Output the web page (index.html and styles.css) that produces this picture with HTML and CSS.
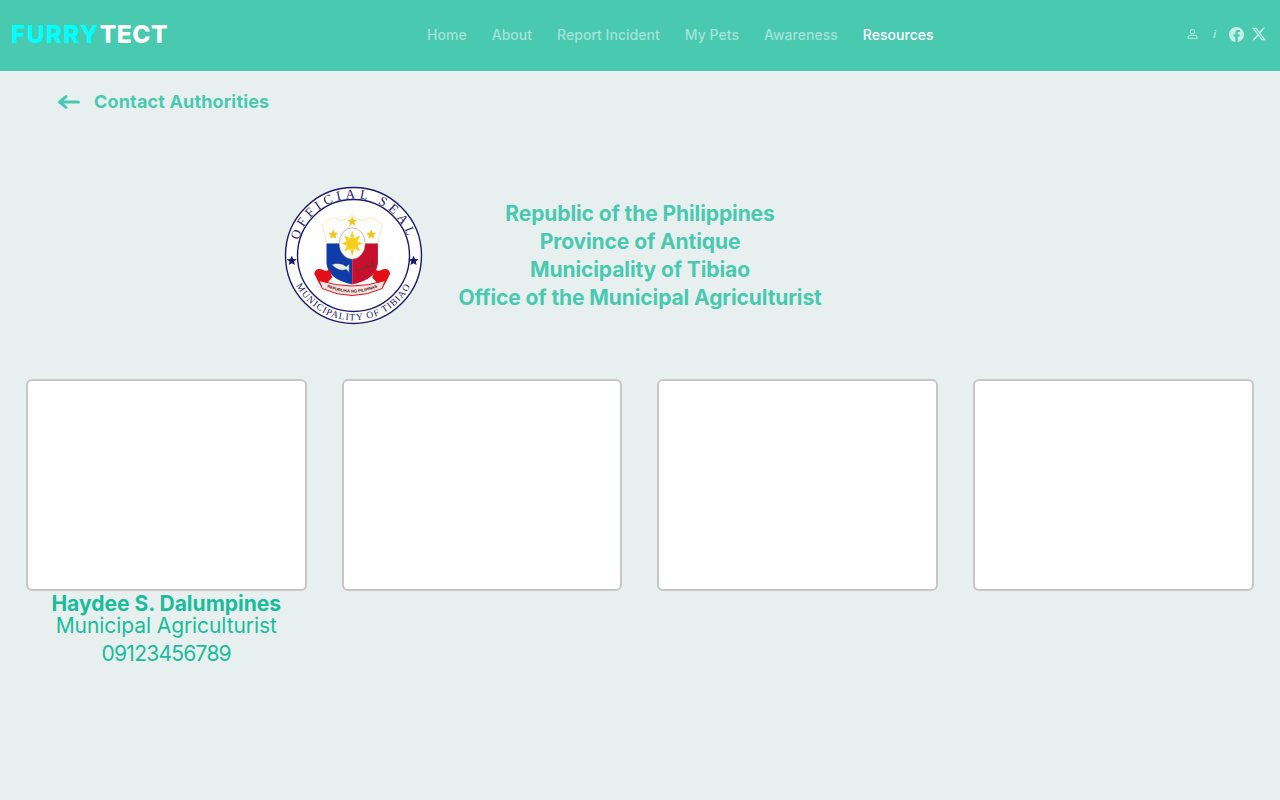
FILE: index.html
```html
<!DOCTYPE html>
<html lang="en">
<head>
<meta charset="utf-8">
<title>Furrytect - Contact Authorities</title>
<link rel="stylesheet" href="styles.css">
</head>
<body>
<header class="topbar">
  <div class="logo"><span class="logo-a">FURRY</span><span class="logo-b">TECT</span></div>
  <nav class="nav">
    <a class="nav-link">Home</a>
    <a class="nav-link">About</a>
    <a class="nav-link">Report Incident</a>
    <a class="nav-link">My Pets</a>
    <a class="nav-link">Awareness</a>
    <a class="nav-link active">Resources</a>
  </nav>
  <div class="tools">
    <svg class="ico-user" viewBox="0 0 11 10" width="11" height="10" fill="none" stroke="currentColor" stroke-width="1.1"><circle cx="5.5" cy="2.7" r="2.2"/><path d="M1 9.5V8.4C1 7.1 2 6.5 3.2 6.5h4.6C9 6.5 10 7.1 10 8.4v1.1z"/></svg>
    <span class="ico-info">i</span>
    <svg class="ico-fb" viewBox="0 0 16 16" width="15" height="15" fill="currentColor"><path d="M16 8.049c0-4.446-3.582-8.05-8-8.05C3.58 0-.002 3.603-.002 8.05c0 4.017 2.926 7.347 6.75 7.951v-5.625h-2.03V8.05H6.75V6.275c0-2.017 1.195-3.131 3.022-3.131.876 0 1.791.157 1.791.157v1.98h-1.009c-.993 0-1.303.621-1.303 1.258v1.51h2.218l-.354 2.326H9.25V16c3.824-.604 6.75-3.934 6.75-7.951z"/></svg>
    <svg class="ico-x" viewBox="0 0 16 16" width="14" height="14" fill="currentColor"><path d="M12.6.75h2.454l-5.36 6.142L16 15.25h-4.937l-3.867-5.07-4.425 5.07H.316l5.733-6.57L0 .75h5.063l3.495 4.633L12.601.75Zm-.86 13.028h1.36L4.323 2.145H2.865z"/></svg>
  </div>
</header>

<main>
  <div class="back">
    <svg class="back-arrow" viewBox="0 0 22 14" width="22" height="14" fill="none" stroke="currentColor" stroke-width="3" stroke-linecap="round" stroke-linejoin="round"><path d="M20.5 7H2M8 1.7 1.6 7 8 12.3"/></svg>
    <span class="back-title">Contact Authorities</span>
  </div>

  <section class="office">
    <svg class="seal" viewBox="-69.5 -69.5 139 139" width="139" height="139">
      <defs>
        <path id="arc-top" d="M-54 18A57 57 0 1 1 54 18"/>
        <path id="arc-bottom" d="M-62 18A64.5 64.5 0 0 0 62 18"/>
        <path id="arc-ribbon" d="M-31 29Q0 45 31 29"/>
        <polygon id="star" points="0,-5 1.5,-1.7 5,-1.5 2.3,.8 3.1,4.2 0,2.4 -3.1,4.2 -2.3,.8 -5,-1.5 -1.5,-1.7"/>
      </defs>
      <circle class="seal-disc" r="68"/>
      <circle class="seal-ring" r="56"/>
      <text class="seal-top"><textPath href="#arc-top" startOffset="50%" text-anchor="middle">OFFICIAL SEAL</textPath></text>
      <text class="seal-bottom"><textPath href="#arc-bottom" startOffset="50%" text-anchor="middle">MUNICIPALITY OF TIBIAO</textPath></text>
      <use href="#star" class="navy" x="-61.7" y="5.3"/>
      <use href="#star" class="navy" x="60" y="5.3"/>
      <g transform="translate(-1.3 0)">
        <path class="shield-top" d="M-30.3 -30.3Q-25 -36 -19 -37.7Q-15 -37 -11 -35Q-5 -36 0 -40Q5 -36 11 -35Q15 -37 19 -37.7Q25 -36 30.3 -30.3Q27 -22 25.7 -12H-25.7Q-27 -22 -30.3 -30.3z"/>
        <path class="shield-blue" d="M-25.7 -12H0V29Q-24 24 -25.7 8z"/>
        <path class="shield-red" d="M25.7 -12H0V29Q24 24 25.7 8z"/>
        <ellipse class="oval" cx="0" cy="-12" rx="13" ry="15.7"/>
        <g class="sun">
          <circle cy="-12" r="6.3"/>
          <path d="M0 -24.5 2 -18.5H-2zM0 .5 2 -5.5H-2zM-11 -12 -6 -10V-14zM11 -12 6 -10V-14zM-8 -20 -2.8 -17.8 -5.8 -14.8zM8 -20 2.8 -17.8 5.8 -14.8zM-8 -4 -2.8 -6.2 -5.8 -9.2zM8 -4 2.8 -6.2 5.8 -9.2z"/>
        </g>
        <use href="#star" class="star" x="0" y="-34"/>
        <use href="#star" class="star" x="-19" y="-21"/>
        <use href="#star" class="star" x="19" y="-21"/>
        <path class="tuna" d="M-20.5 9Q-12 6 -6 11L-3 8.5V17L-6 14Q-13 17 -20.5 9z"/>
        <path class="plow" d="M4 15.5 22 9M20 3 21 12M14 8 16 13"/>
        <path class="ribbon-tail" d="M-38 18Q-36 11 -28 15Q-24 16 -23 13L-20 22 -30 33Q-35 25 -38 18zM38 18Q36 11 28 15Q24 16 23 13L20 22 30 33Q35 25 38 18z"/>
        <path class="ribbon-band" d="M-33 25Q0 36 33 25L30 33Q0 47 -30 33z"/>
        <text class="ribbon-text"><textPath href="#arc-ribbon" startOffset="50%" text-anchor="middle">REPUBLIKA NG PILIPINAS</textPath></text>
      </g>
    </svg>
    <div class="office-text">
      <div>Republic of the Philippines</div>
      <div>Province of Antique</div>
      <div>Municipality of Tibiao</div>
      <div>Office of the Municipal Agriculturist</div>
    </div>
    <div class="seal-spacer"></div>
  </section>

  <section class="people">
    <article class="person">
      <div class="photo"></div>
      <div class="name">Haydee S. Dalumpines</div>
      <div class="detail">Municipal Agriculturist</div>
      <div class="detail phone">09123456789</div>
    </article>
    <article class="person"><div class="photo"></div></article>
    <article class="person"><div class="photo"></div></article>
    <article class="person"><div class="photo"></div></article>
  </section>
</main>
</body>
</html>
```
FILE: styles.css
```css
* { box-sizing: border-box; }
html, body { margin: 0; height: 100%; }
body {
  background: #e8f0ef;
  font-family: Inter, "Noto Sans", sans-serif;
  overflow: hidden;
}
.topbar {
  height: 71px;
  background: #48c9b0;
  display: flex;
  align-items: center;
  padding: 0 14px 3px 11px;
}
.logo {
  width: 157px;
  flex: none;
  font-size: 24.5px;
  font-weight: 800;
  white-space: nowrap;
}
.logo-a { color: #0ff; letter-spacing: 1.3px; }
.logo-b { color: #fff; letter-spacing: .5px; }
.nav {
  margin-left: 259px;
  display: flex;
  gap: 25px;
  font-size: 14px;
  font-weight: 500;
  letter-spacing: .03px;
  white-space: nowrap;
}
.nav-link { color: rgba(255,255,255,.5); }
.nav-link.active { color: #fff; }
.tools {
  margin-left: auto;
  display: flex;
  align-items: center;
  color: rgba(255,255,255,.55);
}
.ico-info {
  margin-left: 15px;
  width: 3px;
  font: italic 700 11px/1 "Liberation Sans", sans-serif;
}
.ico-fb { margin-left: 13px; color: rgba(255,255,255,.68); }
.ico-x { margin-left: 8px; color: rgba(255,255,255,.68); }

.back {
  display: flex;
  align-items: center;
  height: 62px;
  padding-left: 58px;
  gap: 14px;
  color: #48c9b0;
}
.back-title {
  font-size: 18px;
  font-weight: 700;
  letter-spacing: .16px;
  margin-bottom: 2px;
}
.office {
  margin-top: 53px;
  display: flex;
  justify-content: center;
  align-items: center;
  gap: 36px;
}
.seal { flex: none; }
.seal-spacer { width: 139px; flex: none; }
.office-text {
  width: 363px;
  text-align: center;
  color: #48c9b0;
  font-size: 21px;
  font-weight: 700;
  letter-spacing: -.1px;
  line-height: 28px;
  white-space: nowrap;
}
.seal-disc { fill: #fff; stroke: #1a1a6e; stroke-width: 1.4; }
.seal-ring { fill: #fff; stroke: #1a1a6e; stroke-width: 1.4; }
.seal-top { font: 13px "Liberation Serif", serif; letter-spacing: 4.2px; fill: #1a1a6e; }
.seal-bottom { font: 9.5px "Liberation Serif", serif; letter-spacing: 1.1px; fill: #1a1a6e; }
.navy { fill: #1a1a6e; }
.shield-top { fill: #fff; stroke: #efe3a8; stroke-width: .7; }
.shield-blue { fill: #0f3ca8; }
.shield-red { fill: #c8102e; }
.oval { fill: #fff; stroke: #7b7b7b; stroke-width: .5; }
.sun { fill: #f6cf1e; }
.star { fill: #f2c61f; }
.tuna { fill: #e6eef4; stroke: #33476b; stroke-width: .5; }
.plow { fill: none; stroke: #5c3a24; stroke-width: .9; }
.ribbon-tail { fill: #e30f17; }
.ribbon-band { fill: #f7e4e0; stroke: #e30f17; stroke-width: 1; }
.ribbon-text { font: 700 4.1px "Liberation Sans", sans-serif; fill: #4a1212; }

.people {
  margin-top: 54px;
  padding: 0 25.9px 0 25.85px;
  display: grid;
  grid-template-columns: repeat(4, 1fr);
  gap: 35px;
}
.person { text-align: center; color: #1abc9c; }
.photo {
  height: 212px;
  background: #fff;
  border: 2px solid #c9c6c6;
  border-radius: 6px;
}
.name {
  padding-top: 5px;
  font-size: 21px;
  font-weight: 700;
  line-height: 16px;
}
.detail {
  font-size: 21px;
  letter-spacing: -.08px;
  line-height: 28px;
}
.detail.phone { letter-spacing: -.75px; }
```
